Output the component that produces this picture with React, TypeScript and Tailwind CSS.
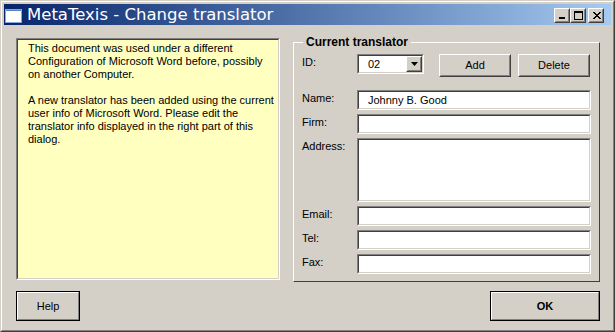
import React from "react";

const F = { fontFamily: '"Liberation Sans", Arial, sans-serif' };

function Sunken({ className = "", children }: { className?: string; children?: React.ReactNode }) {
  return (
    <div className={`border border-t-[#808080] border-l-[#808080] border-r-white border-b-white ${className}`}>
      <div className="w-full h-full border border-t-[#404040] border-l-[#404040] border-r-[#d4d0c8] border-b-[#d4d0c8] flex">
        {children}
      </div>
    </div>
  );
}

function Raised({ className = "", children, inner = "" }: { className?: string; children?: React.ReactNode; inner?: string }) {
  return (
    <div className={`border border-t-white border-l-white border-r-[#404040] border-b-[#404040] bg-[#d4d0c8] ${className}`}>
      <div className={`w-full h-full border border-t-[#d4d0c8] border-l-[#d4d0c8] border-r-[#808080] border-b-[#808080] flex items-center justify-center ${inner}`}>
        {children}
      </div>
    </div>
  );
}

function DefButton({ className = "", children }: { className?: string; children?: React.ReactNode }) {
  return (
    <div className={`border border-black ${className}`}>
      <div className="w-full h-full border border-t-white border-l-white border-r-[#808080] border-b-[#808080] bg-[#d4d0c8] flex items-center justify-center">
        {children}
      </div>
    </div>
  );
}

function CapBtn({ children, className = "" }: { children: React.ReactNode; className?: string }) {
  return (
    <div className={`w-[16px] h-[15px] border border-t-white border-l-white border-r-[#404040] border-b-[#404040] bg-[#d4d0c8] ${className}`}>
      <div className="w-full h-full border border-t-[#d4d0c8] border-l-[#d4d0c8] border-r-[#808080] border-b-[#808080] relative">
        {children}
      </div>
    </div>
  );
}

function Row({ label, h = 20, children }: { label: string; h?: number; children?: React.ReactNode }) {
  return (
    <div className="flex items-start">
      <div className="w-[55px] pt-[2px] text-[11px] leading-[13px] text-black">{label}</div>
      <Sunken className={h === 20 ? "w-[234px] h-[20px] bg-white" : "w-[234px] h-[64px] bg-white"}>{children}</Sunken>
    </div>
  );
}

export default function App() {
  return (
    <div style={F} className="w-[615px] h-[332px] flex flex-col bg-[#d4d0c8] border border-t-[#d4d0c8] border-l-[#d4d0c8] border-r-[#404040] border-b-[#404040] select-none">
      <div className="flex-1 flex flex-col border border-t-white border-l-white border-r-[#808080] border-b-[#808080] p-[2px]">
        {/* Title bar */}
        <div className="h-[21px] flex items-center bg-linear-to-r from-[#0a246a] to-[#a6caf0] shrink-0">
          <svg width="17" height="14" viewBox="0 0 17 14" className="ml-[1px] mt-[2px]">
            <rect x="0.5" y="0.5" width="16" height="13" fill="#ffffff" stroke="#8aa6d8" />
            <rect x="1" y="1" width="15" height="1" fill="#5a80c0" />
          </svg>
          <div
            className="ml-[5px] text-white text-[16.5px] leading-[21px] whitespace-nowrap"
            style={{ fontFamily: '"DejaVu Sans", Verdana, sans-serif' }}
          >
            MetaTexis - Change translator
          </div>
          <div className="ml-auto mr-[7px] flex items-center mt-[1px]">
            <CapBtn>
              <div className="absolute left-[3px] bottom-[2px] w-[6px] h-[2px] bg-black" />
            </CapBtn>
            <CapBtn>
              <div className="absolute left-[2px] top-[1px] w-[9px] h-[9px] border border-black border-t-2" />
            </CapBtn>
            <CapBtn className="ml-[2px]">
              <svg width="14" height="13" viewBox="0 0 14 13" className="absolute left-0 top-0">
                <path d="M3 2 L10 9 M4 2 L11 9 M10 2 L3 9 M11 2 L4 9" stroke="#000" strokeWidth="1" shapeRendering="crispEdges" />
              </svg>
            </CapBtn>
          </div>
        </div>

        {/* Body */}
        <div className="flex-1 flex flex-col pl-[12px] pr-[11px] pt-[13px]">
          <div className="flex items-start">
            <Sunken className="w-[264px] h-[242px] bg-[#ffffc0]">
              <div className="pl-[10px] pt-[2px] text-[11px] leading-[13px] text-black whitespace-nowrap">
                <div>This document was used under a different</div>
                <div>Configuration of Microsoft Word before, possibly</div>
                <div>on another Computer.</div>
                <div className="mt-[13px]">A new translator has been added using the current</div>
                <div>user info of Microsoft Word. Please edit the</div>
                <div>translator info displayed in the right part of this</div>
                <div>dialog.</div>
              </div>
            </Sunken>

            <div className="relative ml-[13px] mt-[4px] w-[307px] h-[240px] border border-t-white border-l-white border-r-[#404040] border-b-[#404040]">
              <div className="absolute left-[9px] top-[-8px] px-[3px] bg-[#d4d0c8] text-[12px] leading-[14px] font-bold text-black whitespace-nowrap">
                Current translator
              </div>
              <div className="pl-[8px] pt-[11px] flex flex-col">
                <div className="flex items-start">
                  <div className="w-[55px] pt-[2px] text-[11px] leading-[13px] text-black">ID:</div>
                  <Sunken className="w-[67px] h-[20px] bg-white">
                    <div className="flex-1 pl-[9px] text-[11px] leading-[16px] text-black">02</div>
                    <Raised className="w-[16px] h-[16px]">
                      <svg width="7" height="4" viewBox="0 0 7 4">
                        <path d="M0 0 H7 L3.5 4 Z" fill="#000" />
                      </svg>
                    </Raised>
                  </Sunken>
                  <Raised className="ml-[15px] w-[72px] h-[23px]">
                    <span className="text-[11px] text-black">Add</span>
                  </Raised>
                  <Raised className="ml-[7px] w-[72px] h-[23px]">
                    <span className="text-[11px] text-black">Delete</span>
                  </Raised>
                </div>
                <div className="mt-[13px] flex flex-col gap-[4px]">
                  <Row label="Name:">
                    <div className="pl-[9px] text-[11px] leading-[16px] text-black whitespace-nowrap">Johnny B. Good</div>
                  </Row>
                  <Row label="Firm:" />
                  <Row label="Address:" h={64} />
                  <Row label="Email:" />
                  <Row label="Tel:" />
                  <Row label="Fax:" />
                </div>
              </div>
            </div>
          </div>

          <div className="mt-[9px] flex items-start justify-between">
            <DefButton className="w-[64px] h-[30px]">
              <span className="text-[11px] text-black">Help</span>
            </DefButton>
            <DefButton className="w-[110px] h-[30px]">
              <span className="text-[11px] font-bold text-black">OK</span>
            </DefButton>
          </div>
        </div>
      </div>
    </div>
  );
}
